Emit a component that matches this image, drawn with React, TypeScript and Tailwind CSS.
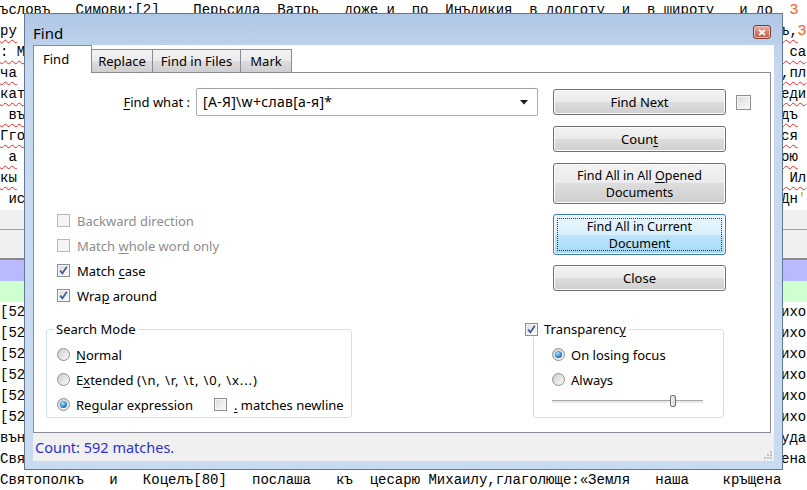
import React from 'react';

const mono = "font-['Liberation_Mono','DejaVu_Sans_Mono',monospace] text-[14px] leading-[21px] whitespace-pre text-black";
const ui = "font-['Noto_Sans','Open_Sans',sans-serif] text-[13px] leading-[16px] text-black";
const wavy = 'underline decoration-wavy decoration-[#ff2020] decoration-1 underline-offset-[4px]';

// put words at fixed columns of the mono text
const cols = (parts: [number, string][]) => {
  let s = '';
  for (const [c, w] of parts) s = s.padEnd(c, ' ') + w;
  return s;
};

const topLine = cols([
  [0, 'ъсловъ'], [9, 'Симови:[2]'], [23, 'Перьсида'], [33, 'Ватрь'], [41, 'доже'], [46, 'и'],
  [49, 'по'], [53, 'Инъдикия'], [63, 'в'], [65, 'долготу'], [74, 'и'], [77, 'в'], [79, 'широту'],
  [88, 'и'], [90, 'до'], [94, ''],
]);

const upper: { l: string; r: string; wl: boolean; wr: boolean; x?: string; xc?: string }[] = [
  { l: 'ру', r: 'ъ,', wl: true, wr: true, x: 'З', xc: 'text-[#ff5a1a]' },
  { l: ': М', r: ' са', wl: true, wr: true },
  { l: 'ча', r: ',пл', wl: true, wr: true },
  { l: 'кат', r: 'еди', wl: true, wr: true },
  { l: ' въ', r: 'дъ', wl: true, wr: true },
  { l: 'Гго', r: 'ся', wl: true, wr: true },
  { l: ' а', r: 'ою', wl: true, wr: true },
  { l: 'кы', r: ' Ил', wl: true, wr: true },
  { l: ' ис', r: 'Дн', wl: false, wr: false, x: '\'', xc: 'text-[#e0b000]' },
];

const lower: { l: string; r: string }[] = [
  { l: '[52', r: 'ихо' },
  { l: '[52', r: 'ихо' },
  { l: '[52', r: 'ихо' },
  { l: '[52', r: 'ихо' },
  { l: '[52', r: 'ихо' },
  { l: '[52', r: 'ихо' },
  { l: 'вън', r: 'уда' },
  { l: 'Свя', r: 'ена' },
];

const lastLine = cols([
  [0, 'Святополкъ'], [13, 'и'], [17, 'Коцелъ[80]'], [30, 'послаша'], [40, 'къ'], [44, 'цесарю'],
  [51, 'Михаилу,глаголюще:«Земля'], [78, 'наша'], [86, 'кръщена'],
]);

function Editor() {
  return (
    <div className={mono}>
      <div className="h-[21px] overflow-hidden">
        <span>{topLine}</span>
        <span className="text-[#ff5a1a]">З</span>
      </div>
      {upper.map((ln, i) => (
        <div key={i} className="flex h-[21px]">
          <span className="w-[781px] shrink-0">
            <span className={ln.wl ? wavy : ''}>{ln.l}</span>
          </span>
          <span className={ln.wr ? wavy : ''}>{ln.r}</span>
          {ln.x && <span className={ln.xc}>{ln.x}</span>}
        </div>
      ))}
      <div className="flex h-[50px] flex-col bg-[#f0f0f0]">
        <div className="h-[19px]" />
        <div className="h-px bg-[#a0a0a0]" />
        <div className="flex-1" />
        <div className="h-[2px] bg-[#8a8a8a]" />
      </div>
      <div className="h-[21px] bg-[#b9b9ff]" />
      <div className="h-[21px] bg-[#cfffcf]" />
      {lower.map((ln, i) => (
        <div key={i} className="flex h-[21px]">
          <span className="w-[781px] shrink-0">{ln.l}</span>
          <span>{ln.r}</span>
        </div>
      ))}
      <div className="h-[21px]">{lastLine}</div>
    </div>
  );
}

function Check({ on = false, off = false }: { on?: boolean; off?: boolean }) {
  return (
    <span
      className={
        off
          ? 'flex h-[13px] w-[13px] shrink-0 border border-[#b8b8b8] bg-[#f4f4f4]'
          : 'flex h-[13px] w-[13px] shrink-0 items-center justify-center border border-[#8e8f8f] bg-linear-to-br from-[#d9dadb] to-[#fcfcfc] shadow-[inset_0_0_0_1px_#f6f6f6]'
      }
    >
      {on && (
        <svg width="11" height="11" viewBox="0 0 11 11">
          <path d="M2.2 5.6 L4.4 8.4 L8.8 1.8" fill="none" stroke="#3b5998" strokeWidth="1.7" />
        </svg>
      )}
    </span>
  );
}

function Radio({ on = false }: { on?: boolean }) {
  return (
    <span className="flex h-[13px] w-[13px] shrink-0 items-center justify-center rounded-full border border-[#8e8f8f] bg-linear-to-br from-[#cdcdcd] to-[#fbfbfb]">
      {on && (
        <span className="h-[7px] w-[7px] rounded-full bg-[radial-gradient(circle_at_40%_35%,#b8e4fb,#2b86c9_55%,#15507f)]" />
      )}
    </span>
  );
}

function Btn({ children, tall = false, focus = false }: { children: React.ReactNode; tall?: boolean; focus?: boolean }) {
  return (
    <div
      className={
        (tall ? 'h-[41px] text-[12.5px] leading-[17px] ' : 'h-[26px] ') +
        (focus
          ? 'relative flex w-[173px] items-center justify-center rounded-[3px] border border-[#3c7fb1] bg-[linear-gradient(#eaf6fd_0%,#d9f0fc_50%,#bee6fd_50%,#a7d9f5_100%)] text-center shadow-[inset_0_0_0_1px_#f6fbfe]'
          : 'flex w-[173px] items-center justify-center rounded-[3px] border border-[#707070] bg-[linear-gradient(#f2f2f2_0%,#ebebeb_50%,#dddddd_50%,#cfcfcf_100%)] text-center shadow-[inset_0_0_0_1px_#fbfbfb]')
      }
    >
      {focus && <span className="absolute inset-[3px] border border-dotted border-[#1b3a55]" />}
      <span className="relative">{children}</span>
    </div>
  );
}

const U = ({ children }: { children: React.ReactNode }) => (
  <span className="underline underline-offset-[2px]">{children}</span>
);

function CheckRow({ on = false, off = false, children }: { on?: boolean; off?: boolean; children: React.ReactNode }) {
  return (
    <div className="flex h-[25px] items-center gap-[7px] pl-[23px]">
      <Check on={on} off={off} />
      <span className={off ? 'text-[#8d8d8d]' : ''}>{children}</span>
    </div>
  );
}

function FindDialog() {
  return (
    <div className={`absolute left-[24px] top-[13px] flex h-[457px] w-[759px] flex-col border border-[#62799a] bg-linear-to-b from-[#afc7e5] via-[#c6d9ef] via-[12%] to-[#c9dbf0] ${ui}`}>
      {/* title bar */}
      <div className="flex h-[31px] shrink-0 items-start justify-between pl-[8px] pr-[11px]">
        <span className="pt-[9px] text-[15px] leading-[20px]">Find</span>
        <span className="mt-[11px] flex h-[14px] w-[18px] items-center justify-center rounded-[3px] border border-[#7d3b33] bg-linear-to-b from-[#e8b2a9] to-[#c0503f] shadow-[inset_0_0_0_1px_#efc3bb]">
          <svg width="8" height="7" viewBox="0 0 8 7">
            <path d="M1 0.8 L7 6.2 M7 0.8 L1 6.2" stroke="#ffffff" strokeWidth="1.8" />
          </svg>
        </span>
      </div>

      {/* client area */}
      <div className="mx-[8px] mb-[8px] flex flex-1 flex-col bg-white">
        <div className="flex h-[27px] shrink-0 items-end">
          <div className="relative z-10 -mb-px flex h-[28px] w-[59px] items-start border border-b-0 border-[#898c95] bg-white pl-[9px] pt-[5px]">
            Find
          </div>
          <div className="flex h-[23px] w-[61px] items-center justify-center border border-b-0 border-l-0 border-[#898c95] bg-[linear-gradient(#f2f2f2_0%,#ebebeb_50%,#dddddd_50%,#cfcfcf_100%)]">
            Replace
          </div>
          <div className="flex h-[23px] w-[88px] items-center justify-center border border-b-0 border-l-0 border-[#898c95] bg-[linear-gradient(#f2f2f2_0%,#ebebeb_50%,#dddddd_50%,#cfcfcf_100%)]">
            Find in Files
          </div>
          <div className="flex h-[23px] w-[51px] items-center justify-center border border-b-0 border-l-0 border-[#898c95] bg-[linear-gradient(#f2f2f2_0%,#ebebeb_50%,#dddddd_50%,#cfcfcf_100%)]">
            Mark
          </div>
        </div>

        <div className="flex w-[738px] flex-1 flex-col border border-[#898c95]">
          {/* upper row: search field + options / buttons */}
          <div className="flex items-start">
            <div className="w-[504px] shrink-0">
              <div className="mt-[15px] flex h-[28px] items-center">
                <span className="w-[156px] shrink-0 text-right">
                  <U>F</U>ind what :
                </span>
                <div className="ml-[6px] flex h-[28px] w-[342px] items-center justify-between rounded-[2px] border border-[#abadb3] border-t-[#9da0a8] bg-white pl-[6px] pr-[9px]">
                  <span className="text-[14px] tracking-[0.3px]">{'[А-Я]\\w+слав[а-я]*'}</span>
                  <svg width="8" height="5" viewBox="0 0 8 5">
                    <path d="M0 0 H8 L4 4.5 Z" fill="#1a1a1a" />
                  </svg>
                </div>
              </div>
              <div className="mt-[92px]">
                <CheckRow off>Backward direction</CheckRow>
                <CheckRow off>
                  Match <U>w</U>hole word only
                </CheckRow>
                <CheckRow on>
                  Match <U>c</U>ase
                </CheckRow>
                <CheckRow on>
                  Wra<U>p</U> around
                </CheckRow>
              </div>
            </div>

            <div className="ml-[15px] flex flex-col gap-[11px] pt-[16px]">
              <div className="flex items-center gap-[10px]">
                <Btn>Find Next</Btn>
                <span className="flex h-[15px] w-[15px] border border-[#8e8f8f] bg-linear-to-br from-[#d9dadb] to-[#fcfcfc] shadow-[inset_0_0_0_1px_#f6f6f6]" />
              </div>
              <Btn>
                Coun<U>t</U>
              </Btn>
              <Btn tall>
                Find All in All <U>O</U>pened
                <br />
                Documents
              </Btn>
              <div className="-mt-px">
                <Btn tall focus>
                  Find All in Current
                  <br />
                  Document
                </Btn>
              </div>
              <div className="-mt-px">
                <Btn>Close</Btn>
              </div>
            </div>
          </div>

          {/* lower row: group boxes */}
          <div className="mt-[21px] flex items-start">
            <div className="relative ml-[12px] h-[89px] w-[306px] rounded-[3px] border border-[#d5dfe5] pl-[10px] pt-[12px]">
              <span className="absolute -top-[9px] left-[7px] bg-white px-[2px]">Search Mode</span>
              <div className="flex h-[25px] items-center gap-[6px]">
                <Radio />
                <span>
                  <U>N</U>ormal
                </span>
              </div>
              <div className="flex h-[25px] items-center gap-[6px]">
                <Radio />
                <span>
                  E<U>x</U>tended <span className="tracking-[0.9px]">{'(\\n, \\r, \\t, \\0, \\x...)'}</span>
                </span>
              </div>
              <div className="flex h-[25px] items-center">
                <div className="flex w-[157px] items-center gap-[6px]">
                  <Radio on />
                  <span>
                    Re<U>g</U>ular expression
                  </span>
                </div>
                <div className="flex items-center gap-[7px]">
                  <Check />
                  <span>
                    <U>.</U> matches newline
                  </span>
                </div>
              </div>
            </div>

            <div className="relative ml-[181px] h-[89px] w-[191px] rounded-[3px] border border-[#d5dfe5] pl-[18px] pt-[12px]">
              <span className="absolute -left-[9px] -top-[9px] flex items-center gap-[6px] bg-white pr-[3px]">
                <Check on />
                <span>
                  Transparenc<U>y</U>
                </span>
              </span>
              <div className="flex h-[25px] items-center gap-[6px]">
                <Radio on />
                <span>On losing focus</span>
              </div>
              <div className="flex h-[25px] items-center gap-[6px]">
                <Radio />
                <span>Always</span>
              </div>
              <div className="relative mt-[1px] flex h-[16px] w-[151px] items-center">
                <div className="h-[3px] w-full border-t border-[#a7a7a7] bg-[#e7eaea] shadow-[0_1px_0_#ffffff]" />
                <span className="absolute left-[118px] top-[2px] h-[12px] w-[6px] rounded-[2px] border border-[#707070] bg-linear-to-r from-[#f4f4f4] to-[#d8d8d8]" />
              </div>
            </div>
          </div>
        </div>

        {/* status bar */}
        <div className="flex h-[28px] shrink-0 items-center justify-between bg-[#f0f0f0] pl-[2px] pr-[2px]">
          <span className="text-[14.5px] text-[#2f2fcf]">Count: 592 matches.</span>
          <svg width="10" height="10" viewBox="0 0 10 10" className="mb-[2px] self-end">
            <rect x="8" y="2" width="2" height="2" fill="#c2c2c2" />
            <rect x="5" y="5" width="2" height="2" fill="#c2c2c2" />
            <rect x="8" y="5" width="2" height="2" fill="#c2c2c2" />
            <rect x="2" y="8" width="2" height="2" fill="#c2c2c2" />
            <rect x="5" y="8" width="2" height="2" fill="#c2c2c2" />
            <rect x="8" y="8" width="2" height="2" fill="#c2c2c2" />
          </svg>
        </div>
      </div>
    </div>
  );
}

export default function App() {
  return (
    <div className="relative h-[490px] w-[807px] overflow-hidden bg-white">
      <Editor />
      <FindDialog />
    </div>
  );
}
